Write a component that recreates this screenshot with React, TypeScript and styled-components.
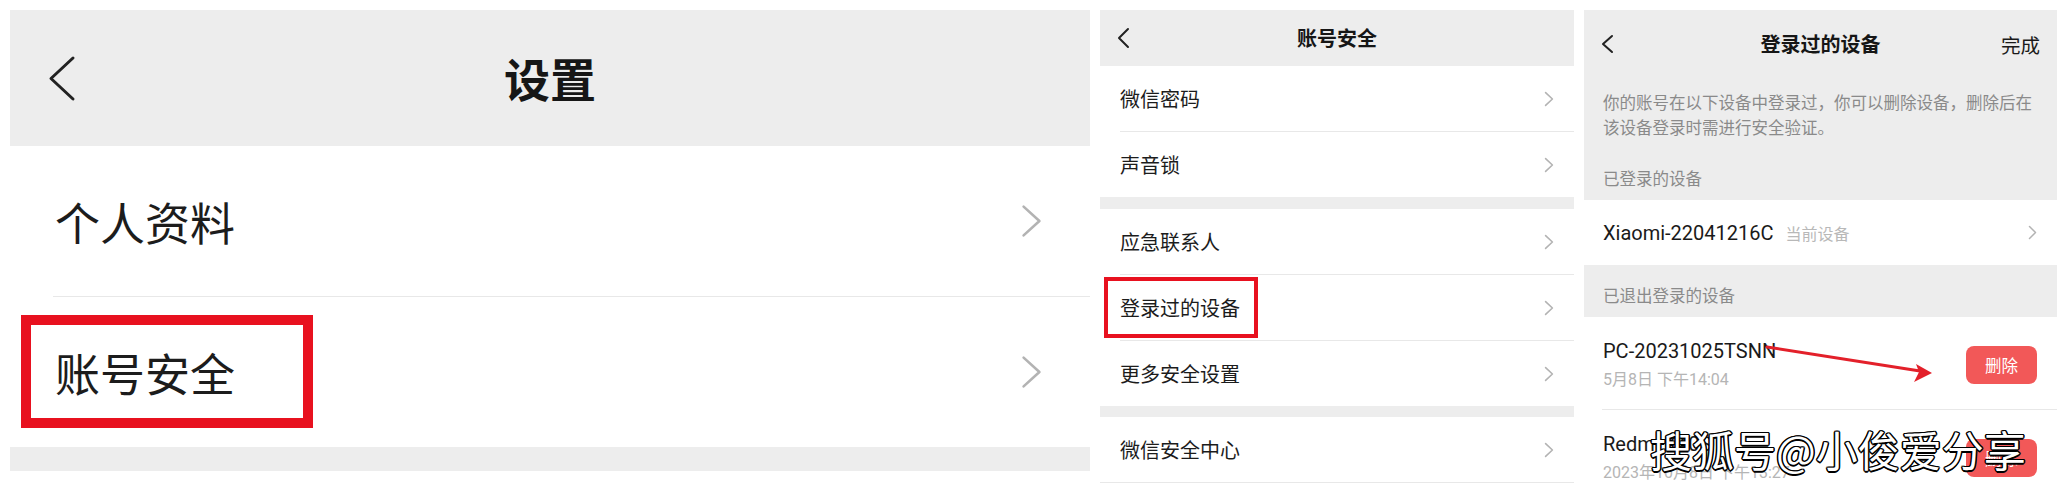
import { Fragment } from 'react';
import styled, { createGlobalStyle } from 'styled-components';

const GlobalStyle = createGlobalStyle`
  html, body {
    margin: 0;
    padding: 0;
    background: #fff;
  }
  body {
    font-family: Roboto, "Noto Sans CJK SC", sans-serif;
    color: #1a1a1a;
  }
`;

const Page = styled.div`
  display: flex;
  gap: 10px;
  height: 494px;
  padding: 10px 0 0 10px;
  box-sizing: border-box;
  overflow: hidden;
`;

const Panel = styled.div<{ $width: number }>`
  position: relative;
  flex: 0 0 ${(p) => p.$width}px;
  display: flex;
  flex-direction: column;
  background: #fff;
  overflow: hidden;
`;

const NavBar = styled.div<{ $height: number; $pad: number }>`
  display: grid;
  grid-template-columns: 1fr auto 1fr;
  align-items: center;
  flex: 0 0 ${(p) => p.$height}px;
  padding: 0 ${(p) => p.$pad}px;
  background: #ededed;
`;

const NavTitle = styled.div<{ $size: number; $weight: number }>`
  font-family: "Noto Sans CJK SC", sans-serif;
  font-size: ${(p) => p.$size}px;
  font-weight: ${(p) => p.$weight};
  color: #161616;
  line-height: 1.2;
`;

const NavAction = styled.div`
  justify-self: end;
  font-family: "Noto Sans CJK SC", sans-serif;
  font-size: 19.5px;
  color: #1a1a1a;
`;

const Row = styled.div<{ $height: number; $padLeft: number; $padRight: number; $size: number }>`
  position: relative;
  display: flex;
  align-items: center;
  justify-content: space-between;
  flex: 0 0 ${(p) => p.$height}px;
  padding: 0 ${(p) => p.$padRight}px 0 ${(p) => p.$padLeft}px;
  font-family: "Noto Sans CJK SC", sans-serif;
  font-size: ${(p) => p.$size}px;
  color: #1c1c1c;
`;

const Divider = styled.div<{ $inset: number }>`
  flex: 0 0 1px;
  margin-left: ${(p) => p.$inset}px;
  background: #e8e8e8;
`;

const Band = styled.div<{ $height: number }>`
  flex: 0 0 ${(p) => p.$height}px;
  background: #ededed;
`;

// red annotation frames drawn over the screenshot
const Highlight = styled.div<{ $left: number; $top: number; $w: number; $h: number; $border: number }>`
  position: absolute;
  left: ${(p) => p.$left}px;
  top: ${(p) => p.$top}px;
  width: ${(p) => p.$w}px;
  height: ${(p) => p.$h}px;
  box-sizing: border-box;
  border: ${(p) => p.$border}px solid #e8111f;
`;

const GrayTop = styled.div`
  display: flex;
  flex-direction: column;
  background: #ededed;
  padding-bottom: 9px;
`;

const Hint = styled.div`
  padding: 0 19px;
  font-family: "Noto Sans CJK SC", sans-serif;
  font-size: 16.5px;
  line-height: 25px;
  color: #8a8a8a;
`;

const Intro = styled(Hint)`
  margin-top: 12px;
  white-space: nowrap;
`;

const SectionLabel = styled(Hint)<{ $top: number; $bottom: number }>`
  padding-top: ${(p) => p.$top}px;
  padding-bottom: ${(p) => p.$bottom}px;
  background: #ededed;
`;

const DeviceInfo = styled.div`
  display: flex;
  flex-direction: column;
`;

const DeviceName = styled.div`
  display: flex;
  align-items: baseline;
  font-family: Roboto, "Noto Sans CJK SC", sans-serif;
  font-size: 20px;
  line-height: 24px;
  color: #1a1a1a;
`;

const CurrentTag = styled.span`
  margin-left: 12px;
  font-family: "Noto Sans CJK SC", sans-serif;
  font-size: 16px;
  color: #b8b8b8;
`;

const DeviceTime = styled.div`
  margin-top: 6px;
  font-family: Roboto, "Noto Sans CJK SC", sans-serif;
  font-size: 16px;
  line-height: 22px;
  color: #b5b5b5;
`;

const DeviceRow = styled.div`
  display: flex;
  align-items: center;
  justify-content: space-between;
  flex: 0 0 92px;
  box-sizing: border-box;
  padding: 22px 20px 18px 19px;
`;

const DeleteButton = styled.button`
  width: 71px;
  height: 38px;
  border: none;
  border-radius: 8px;
  background: #f25858;
  color: #fff;
  font-family: "Noto Sans CJK SC", sans-serif;
  font-size: 16.5px;
  padding: 0;
`;

const Arrow = styled.svg`
  position: absolute;
  left: 180px;
  top: 330px;
`;

const Watermark = styled.div`
  position: absolute;
  left: 66px;
  top: 418px;
  font-family: "Noto Sans CJK SC", sans-serif;
  font-size: 42px;
  line-height: 1;
  font-weight: 400;
  color: #fff;
  white-space: nowrap;
  text-shadow:
    1.5px 0 0 #000, -1.5px 0 0 #000, 0 1.5px 0 #000, 0 -1.5px 0 #000,
    1px 1px 0 #000, -1px -1px 0 #000, 1px -1px 0 #000, -1px 1px 0 #000;
`;

const Back = ({ w, h, sw }: { w: number; h: number; sw: number }) => (
  <svg width={w} height={h} viewBox={`0 0 ${w} ${h}`} fill="none">
    <path
      d={`M${w - sw} ${sw} L${sw} ${h / 2} L${w - sw} ${h - sw}`}
      stroke="#222"
      strokeWidth={sw}
      strokeLinecap="round"
      strokeLinejoin="round"
    />
  </svg>
);

const Chevron = ({ w, h, sw }: { w: number; h: number; sw: number }) => (
  <svg width={w} height={h} viewBox={`0 0 ${w} ${h}`} fill="none">
    <path
      d={`M${sw} ${sw} L${w - sw} ${h / 2} L${sw} ${h - sw}`}
      stroke="#b3b3b3"
      strokeWidth={sw}
      strokeLinecap="round"
      strokeLinejoin="round"
    />
  </svg>
);

const accountItems = [
  ['微信密码', '声音锁'],
  ['应急联系人', '登录过的设备', '更多安全设置'],
  ['微信安全中心'],
];

const SettingsPanel = () => (
  <Panel $width={1080}>
    <NavBar $height={136} $pad={38}>
      <Back w={28} h={47} sw={3} />
      <NavTitle $size={46} $weight={700}>设置</NavTitle>
      <span />
    </NavBar>
    <Row $height={150} $padLeft={45} $padRight={48} $size={45}>
      个人资料
      <Chevron w={21} h={34} sw={2.6} />
    </Row>
    <Divider $inset={43} />
    <Row $height={150} $padLeft={45} $padRight={48} $size={45}>
      账号安全
      <Chevron w={21} h={34} sw={2.6} />
      <Highlight $left={11} $top={18} $w={292} $h={113} $border={10} />
    </Row>
    <Band $height={24} />
  </Panel>
);

const AccountPanel = () => (
  <Panel $width={474}>
    <NavBar $height={56} $pad={17}>
      <Back w={13} h={22} sw={2} />
      <NavTitle $size={20} $weight={600}>账号安全</NavTitle>
      <span />
    </NavBar>
    {accountItems.map((group, gi) => (
      <Fragment key={gi}>
        {gi > 0 && <Band $height={gi === 1 ? 12 : 11} />}
        {group.map((label, i) => (
          <Fragment key={label}>
            {i > 0 && <Divider $inset={20} />}
            <Row $height={65} $padLeft={20} $padRight={20} $size={20}>
              {label}
              <Chevron w={10} h={16} sw={1.6} />
              {label === '登录过的设备' && (
                <Highlight $left={4} $top={2} $w={154} $h={61} $border={4} />
              )}
            </Row>
          </Fragment>
        ))}
      </Fragment>
    ))}
    <Divider $inset={0} />
  </Panel>
);

const DevicesPanel = () => (
  <Panel $width={473}>
    <GrayTop>
      <NavBar $height={68} $pad={17}>
        <Back w={13} h={20} sw={2} />
        <NavTitle $size={20} $weight={600}>登录过的设备</NavTitle>
        <NavAction>完成</NavAction>
      </NavBar>
      <Intro>
        你的账号在以下设备中登录过，你可以删除设备，删除后在
        <br />
        该设备登录时需进行安全验证。
      </Intro>
      <SectionLabel $top={26} $bottom={0}>已登录的设备</SectionLabel>
    </GrayTop>
    <Row $height={65} $padLeft={19} $padRight={20} $size={20}>
      <DeviceName>
        Xiaomi-22041216C
        <CurrentTag>当前设备</CurrentTag>
      </DeviceName>
      <Chevron w={9} h={15} sw={1.5} />
    </Row>
    <SectionLabel $top={18} $bottom={9}>已退出登录的设备</SectionLabel>
    <DeviceRow>
      <DeviceInfo>
        <DeviceName>PC-20231025TSNN</DeviceName>
        <DeviceTime>5月8日 下午14:04</DeviceTime>
      </DeviceInfo>
      <DeleteButton>删除</DeleteButton>
    </DeviceRow>
    <Divider $inset={18} />
    <DeviceRow>
      <DeviceInfo>
        <DeviceName>Redmi K40S</DeviceName>
        <DeviceTime>2023年10月8日 下午13:27</DeviceTime>
      </DeviceInfo>
      <DeleteButton>删除</DeleteButton>
    </DeviceRow>
    <Arrow width="180" height="50" viewBox="0 0 180 50">
      <line x1="3" y1="7" x2="156" y2="31" stroke="#e3202a" strokeWidth="3" strokeLinecap="round" />
      <path d="M168 33 L150 42 L155 32 L152 24 Z" fill="#e3202a" />
    </Arrow>
    <Watermark>搜狐号@小俊爱分享</Watermark>
  </Panel>
);

export default function App() {
  return (
    <>
      <GlobalStyle />
      <Page>
        <SettingsPanel />
        <AccountPanel />
        <DevicesPanel />
      </Page>
    </>
  );
}
